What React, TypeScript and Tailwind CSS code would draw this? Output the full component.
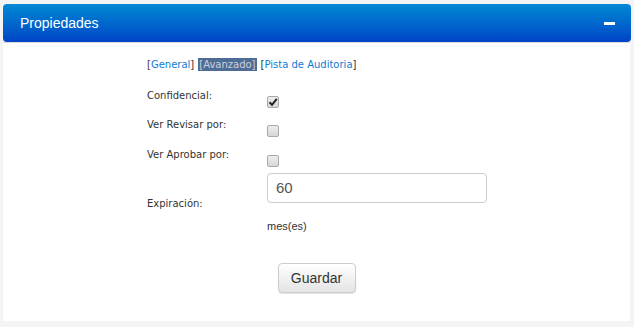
import type { ReactNode } from "react";

const labelFont = "font-['DejaVu_Sans',Verdana,sans-serif] text-[10px] leading-[13px] text-[#333]";

function Box({ checked = false }: { checked?: boolean }) {
  return (
    <span className="flex h-[12px] w-[12px] items-center justify-center rounded-[2px] border border-[#a9a9a9] bg-gradient-to-b from-[#eeeeee] to-[#d6d6d6]">
      {checked && (
        <svg width="10" height="10" viewBox="0 0 10 10">
          <path d="M1.5 5.2 L4 7.8 L8.8 1.8" fill="none" stroke="#222" strokeWidth="2" />
        </svg>
      )}
    </span>
  );
}

function Row({ label, children, h }: { label: string; children: ReactNode; h: string }) {
  return (
    <div className={`flex ${h}`}>
      <div className={`w-[120px] ${labelFont}`}>{label}</div>
      <div className="pt-[7px]">{children}</div>
    </div>
  );
}

export default function App() {
  return (
    <div className="h-[327px] w-[634px] bg-[#f4f4f4] px-[3px] pt-[4px] font-['Liberation_Sans',Arial,sans-serif]">
      <div className="flex h-[38px] items-center justify-between rounded-[4px] bg-gradient-to-b from-[#0888d3] to-[#0043c6] pl-[17px] pr-[16px]">
        <span className="text-[14px] text-white">Propiedades</span>
        <span className="block h-[3px] w-[11px] bg-white" />
      </div>
      <div className="h-px w-[627px] bg-[#dcdcdc]" />
      <div className="flex h-[278px] w-[627px] flex-col bg-white pt-[15px]">
        <div className="pl-[144px]">
          <div className={`${labelFont} flex gap-[4px]`}>
            <span>
              <span className="text-[#5a3a3a]">[</span>
              <span className="text-[#0e7bd4]">General</span>
              <span className="text-[#333]">]</span>
            </span>
            <span className="bg-[#4f6c96] px-[1px] text-[#c9d0dc]">[Avanzado]</span>
            <span>
              <span className="text-[#333]">[</span>
              <span className="text-[#0e7bd4]">Pista de Auditoria</span>
              <span className="text-[#333]">]</span>
            </span>
          </div>
          <div className="mt-[18px] flex flex-col">
            <Row label="Confidencial:" h="h-[29px]">
              <Box checked />
            </Row>
            <Row label="Ver Revisar por:" h="h-[30px]">
              <Box />
            </Row>
            <Row label="Ver Aprobar por:" h="h-[25px]">
              <Box />
            </Row>
            <div className="flex items-center">
              <div className={`w-[120px] ${labelFont}`}>Expiración:</div>
              <div className="flex flex-col">
                <div className="flex h-[30px] w-[220px] items-center rounded-[4px] border border-[#cccccc] pl-[8px] text-[15px] text-[#555]">
                  60
                </div>
                <div className="mt-[17px] text-[11px] leading-[13px] text-[#333]">mes(es)</div>
              </div>
            </div>
          </div>
        </div>
        <div className="mt-[30px] flex justify-center">
          <button className="h-[30px] w-[78px] rounded-[4px] border border-[#cccccc] bg-gradient-to-b from-white to-[#e4e4e4] text-[14px] text-[#333] shadow-[0_1px_1px_rgba(0,0,0,0.12)]">
            Guardar
          </button>
        </div>
      </div>
    </div>
  );
}
